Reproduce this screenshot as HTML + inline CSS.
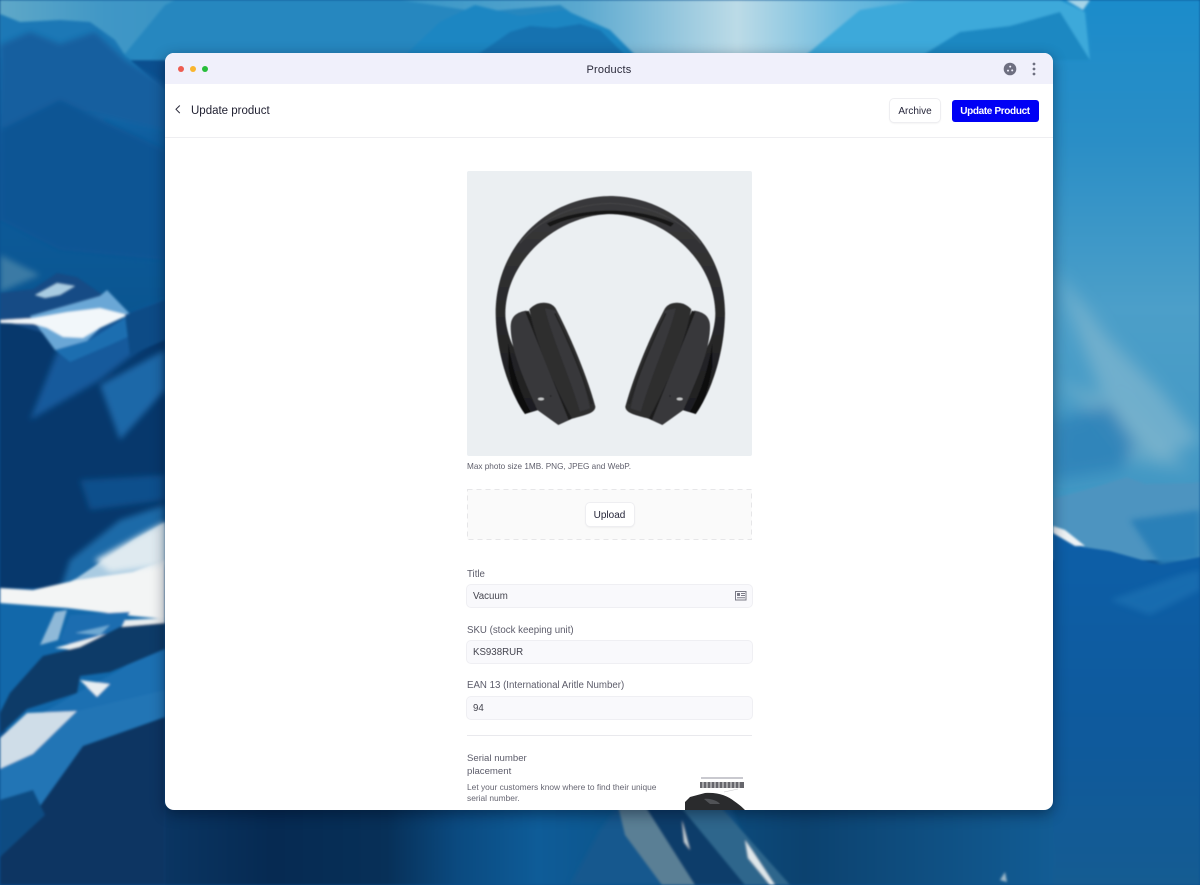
<!DOCTYPE html>
<html><head><meta charset="utf-8"><title>Products</title>
<style>
html,body{margin:0;padding:0;width:1200px;height:885px;overflow:hidden;background:#0b4f8f;font-family:"Liberation Sans",sans-serif}
#bg{position:absolute;left:0;top:0;filter:blur(1px)}
.win{position:absolute;left:165px;top:53px;width:888px;height:757px;background:#fff;border-radius:9px;overflow:hidden;box-shadow:0 4px 14px rgba(0,10,30,.45)}
.t{position:absolute;white-space:nowrap;line-height:1}
.bar{position:absolute;left:0;top:0;width:888px;height:31px;background:#f0f0fb}
.dot{position:absolute;top:13px;width:6px;height:6px;border-radius:50%}
.btn{position:absolute;background:#fff;border-radius:4px;box-shadow:0 0 0 1px #eeeef1,0 1px 2px rgba(0,0,0,.1);color:#26263a;font-size:10px;text-align:center;line-height:26px}
.inp{position:absolute;left:302px;width:285px;height:22px;background:#f9f9fc;border-radius:4px;box-shadow:0 0 0 1px #efeff3;}
.inp span{position:absolute;left:6px;top:0;line-height:23px;font-size:9.7px;color:#45454f}
.lab{font-size:9.7px;color:#5c5c6a;left:302px}
</style></head><body>
<svg id="bg" width="1200" height="885" viewBox="0 0 1200 885" xmlns="http://www.w3.org/2000/svg">
<defs>
<linearGradient id="top" x1="0" y1="0" x2="1" y2="0"><stop offset="0" stop-color="#5fa8c8"/><stop offset=".1" stop-color="#4097c6"/><stop offset=".33" stop-color="#2d8fc4"/><stop offset=".55" stop-color="#5aa8cf"/><stop offset=".7" stop-color="#bcdbe7"/><stop offset=".8" stop-color="#6fbbde"/><stop offset=".93" stop-color="#2e9fd6"/><stop offset="1" stop-color="#1c8fcb"/></linearGradient>
<linearGradient id="right" x1="0" y1="0" x2="0" y2="1"><stop offset="0" stop-color="#1b8ccb"/><stop offset=".25" stop-color="#2a8ec6"/><stop offset=".55" stop-color="#4c9fc9"/><stop offset="1" stop-color="#3f95c2"/></linearGradient>
<linearGradient id="rlow" x1="0" y1="0" x2="0" y2="1"><stop offset="0" stop-color="#0d5fa8"/><stop offset=".6" stop-color="#0f5a9c"/><stop offset="1" stop-color="#155c92"/></linearGradient>
<linearGradient id="left" x1="0" y1="0" x2="0" y2="1"><stop offset="0" stop-color="#1a78b6"/><stop offset=".3" stop-color="#0f5e9f"/><stop offset="1" stop-color="#0a5590"/></linearGradient>
<linearGradient id="bot" x1="0" y1="0" x2="1" y2="0"><stop offset="0" stop-color="#0a3562"/><stop offset=".12" stop-color="#062a52"/><stop offset=".25" stop-color="#073058"/><stop offset=".33" stop-color="#0b4a80"/><stop offset=".42" stop-color="#0e5c98"/><stop offset=".55" stop-color="#0d5388"/><stop offset=".72" stop-color="#0c426f"/><stop offset="1" stop-color="#125c94"/></linearGradient>
<linearGradient id="band" x1="0" y1="0" x2="0" y2="1"><stop offset="0" stop-color="#3a3a3c"/><stop offset=".5" stop-color="#2a2a2c"/><stop offset="1" stop-color="#1e1e20"/></linearGradient>
<filter id="s"><feGaussianBlur stdDeviation="0.6"/></filter>
<filter id="m"><feGaussianBlur stdDeviation="3"/></filter>
<filter id="l"><feGaussianBlur stdDeviation="8"/></filter>
<filter id="hb"><feGaussianBlur stdDeviation="1.6"/></filter>
</defs>
<rect width="1200" height="885" fill="#0b4f8f"/>
<rect x="1040" y="0" width="160" height="560" fill="url(#right)"/>
<rect width="1053" height="60" fill="url(#top)"/>
<g filter="url(#s)">
<path d="M120 60L165 5L175 0H400L480 12L560 5L640 60Z" fill="#2587bf"/>
<path d="M400 60L440 22L475 5L520 16L565 10L610 30L640 60Z" fill="#1f86c2"/>
<path d="M470 60L510 32L530 26L555 28L580 24L600 30L630 60Z" fill="#1272b0"/>
<path d="M800 60L860 10L920 0H1060L1085 12L1090 60Z" fill="#3ea9da"/>
<path d="M915 60L960 32L1010 26L1060 12L1090 60Z" fill="#1b88c2"/>
<path d="M1066 0L1083 10L1090 0Z" fill="#a6d4e8"/>
</g>
<path d="M0 14L20 22L60 20L90 22L115 40L128 60H0Z" fill="#1a78b6" filter="url(#s)"/>
<path d="M0 58H128L165 90V322H0Z" fill="url(#left)"/>
<g filter="url(#m)">
<path d="M0 45L30 32L60 44L95 32L125 60L165 85V130L80 110L0 130Z" fill="#135f9f"/>
<path d="M0 130L60 100L165 150V260L60 250L0 220Z" fill="#0c5594"/>
</g>
<path d="M0 255L40 275L0 292Z" fill="#3a7aa5" filter="url(#m)"/>
<rect x="0" y="318" width="165" height="270" fill="#07386c"/>
<g filter="url(#m)">
<path d="M60 345L128 315L165 300V330L100 380L30 420Z" fill="#145a9c"/>
<path d="M100 385L165 350V390L120 440Z" fill="#1d68a8"/>
<path d="M80 480L165 475V500L90 510Z" fill="#0f4f8c"/>
<path d="M70 560L120 520L165 505V590H60Z" fill="#1d6aa8"/>
</g>
<g filter="url(#s)">
<path d="M0 293L33 289L57 273L77 277L100 293L107 296L130 314L60 338L0 320Z" fill="#124b85"/>
<path d="M35 295L57 283L75 286L60 295L45 298Z" fill="#a9cce2"/>
<path d="M30 316L100 296L107 290L130 314L100 328L83 345L55 350Z" fill="#6aa7d6"/>
<path d="M0 320L33 318L67 312L100 308L128 315L100 328L83 338L63 337L47 328L33 324L0 323Z" fill="#f2f7fa"/>
<path d="M55 350L90 340L128 316L165 300L165 320L110 345L70 362Z" fill="#1f6eb0"/>
<path d="M125 315L165 300V340L130 355Z" fill="#0e4b86"/>
</g>
<rect x="0" y="600" width="165" height="130" fill="#1268aa"/>
<g filter="url(#s)">
<path d="M50 592L77 578L133 540L165 522V575L100 585Z" fill="#a9cbe2"/>
<path d="M0 588L33 590L77 580L133 572L165 560V619L133 616L67 608L0 603Z" fill="#f3f5f5"/>
<path d="M40 645L55 612L67 610L58 640Z" fill="#8fb9d8"/>
<path d="M60 640L70 615L130 612L115 635L80 648Z" fill="#1d6db0"/>
<path d="M75 633L110 625L100 635Z" fill="#6ea8d2"/>
<path d="M55 648L120 630L125 620L165 618V628L120 634L75 650Z" fill="#e9eef0"/>
<path d="M165 640V700L80 720L30 720L77 693L120 670Z" fill="#1c70b2"/>
<path d="M10 693L43 656L80 647L120 627L165 623V649L110 672L80 676L77 693L27 709L0 734V713Z" fill="#0b3a68"/>
<path d="M80 680L110 684L97 697Z" fill="#e8eef2"/>
<path d="M0 738L27 713L77 711L33 754L0 769Z" fill="#cfdde8"/>
<path d="M0 769L33 754L77 711L165 690V717L83 746L33 816L0 800Z" fill="#2375b5"/>
<path d="M165 717L83 746L33 816L0 857V885H165Z" fill="#0a3562"/>
<path d="M0 800L33 790L45 815L0 857Z" fill="#114b82"/>
</g>
<path d="M95 560L140 535L165 522V565L110 572Z" fill="#dfeaf0" filter="url(#m)"/>
<g filter="url(#l)">
<path d="M1055 270L1110 340L1160 390L1200 440L1160 460L1100 390Z" fill="#8abbd0" opacity=".6"/>
<path d="M1053 380L1120 400L1170 450L1190 470L1130 460L1090 410Z" fill="#85b7cd" opacity=".5"/>
<path d="M1055 420L1110 405L1135 445L1120 470L1053 480Z" fill="#2a80b8" opacity=".8"/>
</g>
<path d="M1053 499L1085 490L1127 477L1145 484L1193 483L1200 482V560H1053Z" fill="#4e94c0" filter="url(#s)"/>
<path d="M1130 520L1200 510V560L1160 565Z" fill="#2a80b8" filter="url(#m)"/>
<path d="M1053 528L1083 547L1110 551L1160 565L1200 557V885H1053Z" fill="url(#rlow)"/>
<path d="M1053 526L1065 530L1085 546L1075 546L1053 533Z" fill="#eef3f5"/>
<path d="M1110 600L1180 575L1200 570V590L1150 615Z" fill="#1c72b4" filter="url(#m)" opacity=".7"/>
<rect x="165" y="805" width="888" height="80" fill="url(#bot)"/>
<g filter="url(#m)">
<path d="M570 885L600 830L618 806L730 806L760 885Z" fill="#12598e"/>
</g>
<g filter="url(#s)">
<path d="M618 806L645 806L695 885H662L625 835Z" fill="#5a7f95"/>
<path d="M645 806L680 806L745 885H695Z" fill="#0c3e6a"/>
<path d="M680 806L720 806L790 885H745Z" fill="#2e668c"/>
<path d="M745 840L752 850L775 885L770 885L748 858Z" fill="#dfe7ea"/>
<path d="M682 820L690 850L684 842Z" fill="#c8d3d8"/>
<path d="M1000 880L1005 872L1007 882Z" fill="#9fb9c9"/>
</g>
</svg>

<div class="win">
<div class="bar"></div>
<div class="dot" style="left:13px;background:#ee5c50"></div>
<div class="dot" style="left:25px;background:#f9b52e"></div>
<div class="dot" style="left:37px;background:#27bd3a"></div>
<div class="t" style="left:0;width:888px;text-align:center;top:12px;font-size:11px;color:#2a2a3a;letter-spacing:.2px">Products</div>
<svg style="position:absolute;left:838px;top:9px" width="14" height="14" viewBox="0 0 14 14"><circle cx="7" cy="7" r="6.3" fill="#6e6f80"/><circle cx="5" cy="8.6" r="1" fill="#f0f0fb"/><circle cx="9.2" cy="8.4" r="1" fill="#f0f0fb"/><circle cx="7.2" cy="4.6" r="1" fill="#f0f0fb"/></svg>
<svg style="position:absolute;left:866px;top:9px" width="6" height="14" viewBox="0 0 6 14"><circle cx="3" cy="2" r="1.4" fill="#6e6f80"/><circle cx="3" cy="7" r="1.4" fill="#6e6f80"/><circle cx="3" cy="12" r="1.4" fill="#6e6f80"/></svg>

<svg style="position:absolute;left:9px;top:51px" width="8" height="11" viewBox="0 0 8 11"><path d="M5.8 1.5L2 5.3L5.8 9.1" fill="none" stroke="#2a2a3a" stroke-width="1"/></svg>
<div class="t" style="left:26px;top:53px;font-size:11.5px;color:#1f1f30">Update product</div>
<div class="btn" style="left:725px;top:46px;width:50px;height:23px">Archive</div>
<div style="position:absolute;left:786.5px;top:47px;width:87px;height:22px;background:#0000f5;border-radius:3px;color:#fff;font-size:10px;font-weight:bold;text-align:center;line-height:23px;letter-spacing:-.35px">Update Product</div>
<div style="position:absolute;left:0;top:84px;width:888px;height:1px;background:#eeeef1"></div>

<div style="position:absolute;left:302px;top:118px;width:285px;height:285px;background:#ebeff2;border-radius:2px"></div>
<svg style="position:absolute;left:315px;top:127px" width="260" height="260" viewBox="0 0 780 780">
<defs>
<g id="hp">
<path d="M135 702C90 640 48 520 47 400C47 200 200 48 395 48L395 102C230 104 78 240 76 400C76 430 85 470 100 500L175 690Z" fill="url(#band)"/>
<path d="M120 190C170 125 270 72 395 70" fill="none" stroke="#454547" stroke-width="3"/>
<path d="M210 140C260 115 320 102 395 102L395 92C310 92 250 108 200 130Z" fill="#151516"/>
<path d="M85 490C100 580 125 650 152 695L135 702C110 670 95 620 85 560Z" fill="#0f0f10"/>
<path d="M92 440C92 408 112 396 140 392L285 712L235 735L172 690C132 600 92 510 92 440Z" fill="#38383a"/>
<path d="M136 396L146 392L282 712L266 720Z" fill="#1d1d1e"/>
<path d="M148 388C170 362 212 362 227 385C272 470 322 590 346 680C346 698 320 705 276 716C224 620 170 500 148 388Z" fill="#2d2d2f"/>
<path d="M195 385C215 470 270 590 300 695L330 685C310 590 265 470 227 392Z" fill="#39393b"/>
<path d="M225 400C265 480 310 590 335 672" fill="none" stroke="#252527" stroke-width="6"/>
<ellipse cx="183" cy="657" rx="9" ry="4" fill="#c9cbcc"/>
<circle cx="212" cy="648" r="2" fill="#111"/>
</g>
</defs>
<g filter="url(#hb)">
<use href="#hp"/>
<use href="#hp" transform="translate(782 0) scale(-1 1)"/>
</g>
</svg>
<div class="t" style="left:302px;top:410px;font-size:8.2px;color:#5f5f6c">Max photo size 1MB. PNG, JPEG and WebP.</div>

<svg style="position:absolute;left:302px;top:436px" width="285" height="51" viewBox="0 0 285 51"><rect x=".5" y=".5" width="284" height="50" fill="#fafafa" stroke="#e6e6e8" stroke-dasharray="5 4"/></svg>
<div class="btn" style="left:420.5px;top:450px;width:48px;height:23px">Upload</div>

<div class="t lab" style="top:517px">Title</div>
<div class="inp" style="top:532px"><span>Vacuum</span>
<svg style="position:absolute;left:268px;top:6px" width="12" height="10" viewBox="0 0 12 10"><rect x=".5" y=".5" width="10.5" height="8.5" fill="none" stroke="#7a7a86"/><rect x="2" y="2" width="3" height="3" fill="#7a7a86"/><path d="M6 2.5h4M6 4.5h4M2 6.8h8" stroke="#7a7a86" stroke-width="1"/></svg></div>
<div class="t lab" style="top:573px">SKU (stock keeping unit)</div>
<div class="inp" style="top:588px"><span>KS938RUR</span></div>
<div class="t lab" style="top:628px">EAN 13 (International Aritle Number)</div>
<div class="inp" style="top:644px"><span>94</span></div>
<div style="position:absolute;left:302px;top:682px;width:285px;height:1px;background:#e9e9ed"></div>
<div class="t" style="left:302px;top:701px;font-size:9.6px;color:#5c5c6a">Serial number</div>
<div class="t" style="left:302px;top:714px;font-size:9.6px;color:#5c5c6a">placement</div>
<div class="t" style="left:302px;top:730px;font-size:8.4px;color:#666672">Let your customers know where to find their unique</div>
<div class="t" style="left:302px;top:741px;font-size:8.4px;color:#666672">serial number.</div>

<svg style="position:absolute;left:515px;top:717px" width="70" height="40" viewBox="0 0 70 40">
<rect x="21" y="7" width="42" height="2" fill="#c9c9cf"/>
<rect x="20" y="12" width="44" height="6" fill="#66666c"/>
<path d="M23 12v6M27 12v6M31 12v6M35 12v6M39 12v6M43 12v6M47 12v6M51 12v6M55 12v6M59 12v6" stroke="#e6e6e6" stroke-width="1"/>
<path d="M5 40L5 32L10 27L25 23C38 22 48 26 54 31C60 35 63 38 65 40Z" fill="#2a2b2d"/>
<path d="M24 29C30 28 38 31 40 34L30 34Z" fill="#505256"/>
<path d="M44 22L58 19" stroke="#c9c9cc" stroke-width=".6"/>
</svg>
</div>
</body></html>
